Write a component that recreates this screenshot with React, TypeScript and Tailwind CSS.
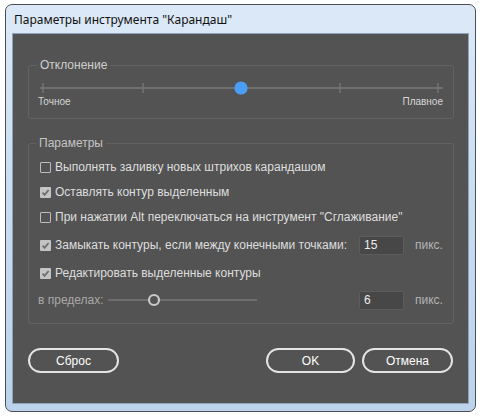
import React from 'react';

const titleFont = { fontFamily: '"Noto Sans", "Liberation Sans", sans-serif' };
const bodyFont = { fontFamily: '"Liberation Sans", Arial, sans-serif' };

const Checkbox = ({ checked }: { checked?: boolean }) =>
  checked ? (
    <span className="flex h-[11px] w-[11px] shrink-0 items-center justify-center rounded-[1px] bg-[#c4c4c4]">
      <svg width="9" height="9" viewBox="0 0 9 9">
        <path d="M1.5 4.6 L3.6 6.8 L7.6 2" fill="none" stroke="#6e6e6e" strokeWidth="1.8" />
      </svg>
    </span>
  ) : (
    <span className="h-[11px] w-[11px] shrink-0 rounded-[1px] border border-[#bdbdbd]" />
  );

const CheckRow = ({ checked, label }: { checked?: boolean; label: string }) => (
  <div className="flex h-[20px] items-center gap-[4px] whitespace-nowrap pl-[11px] text-[12px] text-[#dedede]">
    <Checkbox checked={checked} />
    <span>{label}</span>
  </div>
);

const NumField = ({ value }: { value: string }) => (
  <>
    <div className="flex h-[19px] w-[45px] items-center rounded-[2px] border border-[#5c5c5c] bg-[#474747] pl-[4px] text-[12px] text-[#ececec]">
      {value}
    </div>
    <span className="ml-[11px] text-[12px] text-[#b4b4b4]">пикс.</span>
  </>
);

const PillButton = ({ label, w }: { label: string; w: string }) => (
  <button className={`flex h-[25px] items-center justify-center rounded-full border-2 border-[#e4e4e4] text-[12px] text-white ${w}`}>
    {label}
  </button>
);

export default function App() {
  return (
    <div className="min-h-screen bg-white pl-[5px] pt-[4px]">
      {/* window frame */}
      <div className="flex h-[408px] w-[471px] flex-col rounded-[7px] border border-[#4a4f55] bg-gradient-to-b from-[#dce9f7] via-[#c8dcf1] to-[#bcd3ec] px-[6px] pb-[7px]">
        <div className="flex h-[28px] shrink-0 items-center pl-[2px] pt-[2px] text-[12px] text-[#111]" style={titleFont}>
          Параметры инструмента "Карандаш"
        </div>

        {/* dialog body */}
        <div className="flex flex-1 flex-col border border-[#8fa4bb] bg-[#535353] pl-[15px] pr-[15px]" style={bodyFont}>
          <fieldset className="mt-[23px] rounded-[3px] border border-[#626262] pb-[10px] pl-[11px] pr-[10px]">
            <legend className="ml-[-3px] px-[3px] text-[12px] leading-[16px] text-[#cfcfcf]">Отклонение</legend>
            <svg width="403" height="14" className="mt-[8px] block">
              <line x1="0" y1="7" x2="403" y2="7" stroke="#6f6f6f" strokeWidth="2" />
              {[3, 103, 201, 300, 398].map((x) => (
                <line key={x} x1={x} y1="2" x2={x} y2="12" stroke="#737373" strokeWidth="1.5" />
              ))}
              <circle cx="201" cy="7" r="6.6" fill="#4a9ef5" />
            </svg>
            <div className="mt-[1px] flex justify-between text-[10px] leading-[12px] text-[#d6d6d6]">
              <span className="ml-[-2px]">Точное</span>
              <span>Плавное</span>
            </div>
          </fieldset>

          <fieldset className="mt-[16px] rounded-[3px] border border-[#626262] pb-[13px] pr-[10px]">
            <legend className="ml-[7px] px-[3px] text-[12px] leading-[16px] text-[#c4c4c4]">Параметры</legend>
            <div className="mt-[6px] flex flex-col">
              <CheckRow label="Выполнять заливку новых штрихов карандашом" />
              <div className="mt-[5px]">
                <CheckRow checked label="Оставлять контур выделенным" />
              </div>
              <div className="mt-[5px]">
                <CheckRow label='При нажатии Alt переключаться на инструмент "Сглаживание"' />
              </div>
              <div className="mt-[8px] flex items-center">
                <div className="w-[330px]">
                  <CheckRow checked label="Замыкать контуры, если между конечными точками:" />
                </div>
                <NumField value="15" />
              </div>
              <div className="mt-[8px]">
                <CheckRow checked label="Редактировать выделенные контуры" />
              </div>
              <div className="mt-[7px] flex h-[20px] items-center">
                <div className="flex w-[330px] items-center pl-[9px]">
                  <span className="text-[12px] text-[#a9a9a9]">в пределах:</span>
                  <svg width="149" height="14" className="ml-[4px] block">
                    <line x1="0" y1="7" x2="149" y2="7" stroke="#8a8a8a" strokeWidth="1" />
                    <circle cx="46" cy="7" r="5" fill="#535353" stroke="#c9c9c9" strokeWidth="2.2" />
                  </svg>
                </div>
                <NumField value="6" />
              </div>
            </div>
          </fieldset>

          <div className="mt-[24px] flex items-center">
            <PillButton label="Сброс" w="w-[91px]" />
            <div className="ml-auto flex gap-[7px]">
              <PillButton label="OK" w="w-[89px]" />
              <PillButton label="Отмена" w="w-[91px]" />
            </div>
          </div>
        </div>
      </div>
    </div>
  );
}
